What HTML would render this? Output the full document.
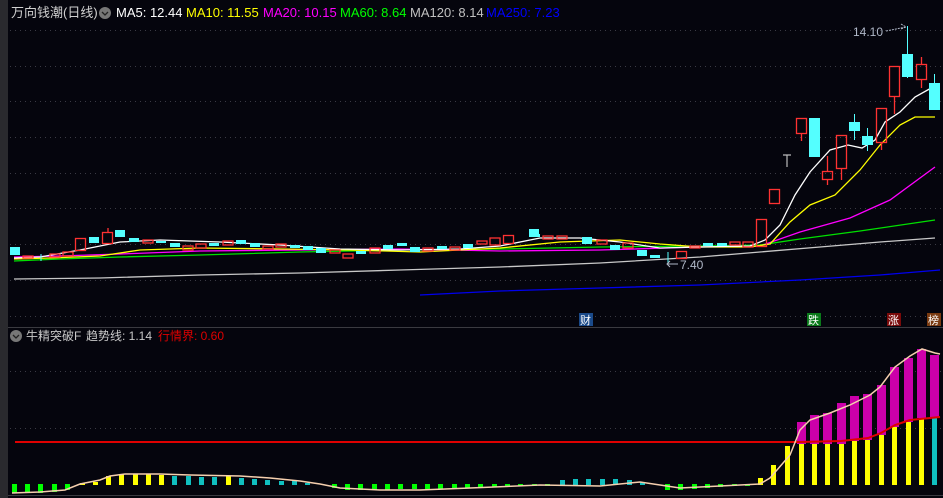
<!DOCTYPE html>
<html><head><meta charset="utf-8"><style>
html,body{margin:0;padding:0;background:#05050d;width:943px;height:498px;overflow:hidden}
svg{display:block}
text{font-family:"Liberation Sans","Noto Sans CJK SC",sans-serif}
</style></head><body>
<svg width="943" height="498" viewBox="0 0 943 498" xmlns="http://www.w3.org/2000/svg">
<rect x="0" y="0" width="943" height="498" fill="#05050d"/>
<rect x="0" y="0" width="8" height="498" fill="#2a2a2e"/>
<g stroke="#3a3a44" stroke-width="1" stroke-dasharray="1,4">
<line x1="10" y1="30.5" x2="943" y2="30.5"/><line x1="10" y1="66.5" x2="943" y2="66.5"/>
<line x1="10" y1="101.5" x2="943" y2="101.5"/><line x1="10" y1="137.5" x2="943" y2="137.5"/>
<line x1="10" y1="173.5" x2="943" y2="173.5"/><line x1="10" y1="208.5" x2="943" y2="208.5"/>
<line x1="10" y1="244.5" x2="943" y2="244.5"/><line x1="10" y1="280.5" x2="943" y2="280.5"/>
<line x1="10" y1="316.5" x2="943" y2="316.5"/>
<line x1="10" y1="371.5" x2="943" y2="371.5"/><line x1="10" y1="428.5" x2="943" y2="428.5"/>
</g>
<line x1="8" y1="327.5" x2="943" y2="327.5" stroke="#3a3a40"/>
<line x1="8" y1="495.5" x2="943" y2="495.5" stroke="#3a3a40"/>
<!-- header -->
<text x="11" y="17" font-size="13" fill="#d0d0d0">万向钱潮(日线)</text>
<circle cx="105" cy="13" r="6" fill="#777"/><path d="M102 12l3 3 3-3" stroke="#222" stroke-width="1.3" fill="none"/>
<text x="116" y="17" font-size="13" fill="#ffffff">MA5: 12.44</text>
<text x="186" y="17" font-size="13" fill="#ffff00">MA10: 11.55</text>
<text x="263" y="17" font-size="13" fill="#ff00ff">MA20: 10.15</text>
<text x="340" y="17" font-size="13" fill="#00ff00">MA60: 8.64</text>
<text x="410" y="17" font-size="13" fill="#c0c0c0">MA120: 8.14</text>
<text x="486" y="17" font-size="13" fill="#0000ff">MA250: 7.23</text>
<!-- MAs -->
<g fill="none" stroke-width="1.3">
<polyline stroke="#0000ee" points="420,295 500,291 600,288 700,285 800,280 880,275 940,270"/>
<polyline stroke="#c8c8c8" points="14,279 100,278 200,275 300,273 400,270 500,267 600,263 700,257 760,252 820,247 880,242 935,238"/>
<polyline stroke="#00e000" points="14,261 60,259 120,257 200,255 300,252 400,250 500,249 600,247 700,246 760,245 800,239 860,231 935,220"/>
<polyline stroke="#ff00ff" points="14,257 60,256 120,254 200,251 300,250 400,249 500,251 600,250 700,247 760,246 800,232 850,218 890,200 935,167"/>
<polyline stroke="#ffff00" points="14,259 50,258 100,256 140,250 200,248 280,249 350,250 420,252 500,248 560,242 620,240 660,244 700,247 750,247 770,244 790,222 810,205 835,195 860,170 880,145 900,125 915,117 935,117"/>
<polyline stroke="#ffffff" points="14,258 40,257 80,250 120,242 160,240 220,242 280,245 340,249 400,250 460,249 500,246 540,238 580,238 620,242 660,248 700,247 750,246 765,240 780,225 795,195 810,172 830,150 848,145 862,148 875,140 885,122 900,112 915,97 933,87"/>
</g>
<!-- candles -->
<g fill="#54ffff">
<rect x="10" y="247" width="10" height="8"/><rect x="89" y="237" width="10" height="6"/><rect x="115" y="230" width="10" height="7"/>
<rect x="129" y="238" width="10" height="4"/><rect x="156" y="241" width="10" height="2"/><rect x="170" y="243" width="10" height="4"/>
<rect x="209" y="243" width="10" height="3"/><rect x="236" y="240" width="10" height="4"/><rect x="250" y="243" width="10" height="4"/>
<rect x="290" y="245" width="10" height="3"/><rect x="303" y="246" width="10" height="4"/><rect x="316" y="248" width="10" height="5"/>
<rect x="356" y="251" width="10" height="3"/><rect x="383" y="245" width="10" height="4"/><rect x="397" y="243" width="10" height="3"/>
<rect x="410" y="247" width="10" height="5"/><rect x="437" y="246" width="10" height="3"/><rect x="463" y="244" width="10" height="4"/>
<rect x="529" y="229" width="10" height="8"/><rect x="530" y="234" width="10" height="3"/><rect x="582" y="237" width="10" height="7"/>
<rect x="610" y="245" width="10" height="5"/><rect x="637" y="250" width="10" height="6"/><rect x="650" y="255" width="10" height="3"/>
<rect x="703" y="243" width="10" height="3"/><rect x="717" y="243" width="10" height="3"/>
<rect x="809" y="118" width="11" height="39"/><rect x="849" y="122" width="11" height="9"/><rect x="862" y="136" width="11" height="9"/>
<rect x="902" y="54" width="11" height="23"/><rect x="929" y="83" width="11" height="27"/>
</g>
<g stroke="#54ffff" stroke-width="1">
<line x1="854.5" y1="114" x2="854.5" y2="140"/><line x1="867.5" y1="128" x2="867.5" y2="151"/>
<line x1="907.5" y1="26" x2="907.5" y2="78"/><line x1="934.5" y1="74" x2="934.5" y2="83"/>
<line x1="41" y1="254" x2="41" y2="261"/><line x1="668" y1="252" x2="668" y2="264"/>
</g>
<g fill="none" stroke="#ff3232" stroke-width="1.3">
<rect x="23" y="256" width="10" height="2"/><rect x="50" y="254" width="10" height="3"/><rect x="63" y="252" width="10" height="4"/>
<rect x="75.5" y="238.5" width="10" height="12"/><rect x="102.5" y="232.5" width="10" height="11"/><rect x="143" y="240" width="10" height="3"/>
<rect x="183" y="246" width="10" height="4"/><rect x="196" y="244" width="10" height="4"/><rect x="223" y="241" width="10" height="4"/>
<rect x="263" y="246" width="10" height="3"/><rect x="276" y="244" width="10" height="3"/><rect x="330" y="250" width="10" height="3"/>
<rect x="343" y="254" width="10" height="4"/><rect x="370" y="248" width="10" height="5"/><rect x="423" y="248" width="10" height="3"/>
<rect x="450" y="247" width="10" height="3"/><rect x="477" y="241" width="10" height="3"/><rect x="490" y="238" width="10" height="7"/>
<rect x="503.5" y="235.5" width="10" height="8"/><rect x="543" y="236" width="10" height="3"/><rect x="557" y="236" width="10" height="3"/>
<rect x="597" y="240" width="10" height="4"/><rect x="623" y="243" width="10" height="5"/><rect x="676.5" y="251.5" width="10" height="7"/>
<rect x="690" y="246" width="10" height="2"/><rect x="730" y="242" width="10" height="3"/><rect x="743" y="242" width="10" height="5"/>
<rect x="756.5" y="219.5" width="10" height="27"/><rect x="769.5" y="189.5" width="10" height="14"/><rect x="796.5" y="118.5" width="10" height="15"/>
<rect x="822.5" y="171.5" width="10" height="8"/><rect x="836.5" y="135.5" width="10" height="33"/><rect x="876.5" y="108.5" width="10" height="34"/>
<rect x="889.5" y="66.5" width="10" height="30"/><rect x="916.5" y="64.5" width="10" height="15"/>
<line x1="108" y1="228" x2="108" y2="232"/><line x1="801.5" y1="133" x2="801.5" y2="141"/><line x1="827.5" y1="156" x2="827.5" y2="171"/>
<line x1="827.5" y1="180" x2="827.5" y2="185"/><line x1="841.5" y1="168" x2="841.5" y2="180"/><line x1="894.5" y1="96" x2="894.5" y2="114"/>
<line x1="921.5" y1="57" x2="921.5" y2="64"/><line x1="921.5" y1="79" x2="921.5" y2="88"/><line x1="881.5" y1="142" x2="881.5" y2="150"/>
</g>
<path d="M783 155h8M787 155v12" stroke="#bbb" stroke-width="1.2"/>
<text x="853" y="36" font-size="12" fill="#b0b8c8">14.10</text>
<path d="M886 31l20-4M901 24l5 3-5 2" stroke="#b0b8c8" fill="none" stroke-dasharray="2,1"/>
<text x="680" y="269" font-size="12" fill="#b0b8c8">7.40</text>
<path d="M678 264h-11M670 261l-3 3 3 3" stroke="#b0b8c8" fill="none"/>
<!-- markers -->
<rect x="579" y="313" width="14" height="13" fill="#1a4a8a"/><text x="580" y="324" font-size="11" fill="#fff">财</text>
<rect x="807" y="313" width="14" height="13" fill="#0a7a1a"/><text x="808" y="324" font-size="11" fill="#fff">跌</text>
<rect x="887" y="313" width="14" height="13" fill="#7a0a0a"/><text x="888" y="324" font-size="11" fill="#fff">涨</text>
<rect x="927" y="313" width="14" height="13" fill="#7a3a10"/><text x="928" y="324" font-size="11" fill="#fff">榜</text>
<!-- lower panel header -->
<circle cx="16" cy="336" r="6" fill="#777"/><path d="M13 335l3 3 3-3" stroke="#222" stroke-width="1.3" fill="none"/>
<text x="26" y="340" font-size="12" fill="#c8c8c8">牛精突破F</text>
<text x="86" y="340" font-size="12" fill="#c8c8c8">趋势线: 1.14</text>
<text x="158" y="340" font-size="12" fill="#e00000">行情界: 0.60</text>
<!-- histogram -->
<g fill="#00ff00">
<rect x="12" y="484" width="5" height="9"/><rect x="25" y="484" width="5" height="9"/><rect x="38" y="484" width="5" height="9"/>
<rect x="52" y="484" width="5" height="8"/><rect x="65" y="484" width="5" height="6"/>
<rect x="332" y="484" width="5" height="4"/><rect x="345" y="484" width="5" height="6"/><rect x="358" y="484" width="5" height="6"/>
<rect x="372" y="484" width="5" height="6"/><rect x="385" y="484" width="5" height="6"/><rect x="398" y="484" width="5" height="5"/>
<rect x="412" y="484" width="5" height="5"/><rect x="425" y="484" width="5" height="5"/><rect x="438" y="484" width="5" height="5"/>
<rect x="452" y="484" width="5" height="4"/><rect x="465" y="484" width="5" height="4"/><rect x="478" y="484" width="5" height="4"/>
<rect x="492" y="484" width="5" height="3"/><rect x="505" y="484" width="5" height="3"/><rect x="518" y="484" width="5" height="2"/>
<rect x="532" y="484" width="5" height="2"/><rect x="545" y="484" width="5" height="2"/><rect x="665" y="484" width="5" height="6"/>
<rect x="678" y="484" width="5" height="6"/><rect x="692" y="484" width="5" height="5"/><rect x="705" y="484" width="5" height="4"/>
<rect x="718" y="484" width="5" height="3"/><rect x="732" y="484" width="5" height="2"/><rect x="745" y="484" width="5" height="2"/>
</g>
<g fill="#ffff00">
<rect x="80" y="483" width="5" height="2"/><rect x="93" y="482" width="5" height="3"/><rect x="106" y="476" width="5" height="9"/>
<rect x="119" y="474" width="5" height="11"/><rect x="133" y="474" width="5" height="11"/><rect x="146" y="474" width="5" height="11"/>
<rect x="159" y="475" width="5" height="10"/><rect x="226" y="476" width="5" height="9"/>
<rect x="758" y="478" width="5" height="7"/><rect x="771" y="465" width="5" height="20"/><rect x="785" y="446" width="5" height="39"/>
<rect x="799" y="444" width="5" height="41"/><rect x="812" y="444" width="5" height="41"/><rect x="825" y="444" width="5" height="41"/>
<rect x="839" y="444" width="5" height="41"/><rect x="852" y="441" width="5" height="44"/><rect x="865" y="440" width="5" height="45"/>
<rect x="879" y="435" width="5" height="50"/><rect x="892" y="427" width="5" height="58"/><rect x="906" y="422" width="5" height="63"/>
<rect x="919" y="418" width="5" height="67"/>
</g>
<g fill="#10c0c0">
<rect x="172" y="476" width="5" height="9"/><rect x="186" y="476" width="5" height="9"/><rect x="199" y="477" width="5" height="8"/>
<rect x="212" y="477" width="5" height="8"/><rect x="239" y="478" width="5" height="7"/><rect x="252" y="479" width="5" height="6"/>
<rect x="265" y="480" width="5" height="5"/><rect x="279" y="481" width="5" height="4"/><rect x="292" y="481" width="5" height="4"/>
<rect x="305" y="483" width="5" height="2"/><rect x="560" y="480" width="5" height="5"/><rect x="573" y="479" width="5" height="6"/>
<rect x="586" y="479" width="5" height="6"/><rect x="600" y="479" width="5" height="6"/><rect x="613" y="479" width="5" height="6"/>
<rect x="627" y="480" width="5" height="5"/><rect x="640" y="482" width="5" height="3"/>
<rect x="932" y="418" width="5" height="67"/>
</g>
<g fill="#cc00aa">
<rect x="797" y="422" width="9" height="22"/><rect x="810" y="415" width="9" height="29"/><rect x="823" y="413" width="9" height="31"/>
<rect x="837" y="403" width="9" height="41"/><rect x="850" y="396" width="9" height="45"/><rect x="863" y="394" width="9" height="46"/>
<rect x="877" y="385" width="9" height="50"/><rect x="890" y="367" width="9" height="60"/><rect x="904" y="358" width="9" height="64"/>
<rect x="917" y="349" width="9" height="69"/><rect x="930" y="355" width="9" height="63"/>
</g>
<polyline fill="none" stroke="#e00000" stroke-width="2" points="15,442 800,442 841,441 868,438 881,433 895,425 910,420 940,417"/>
<polyline fill="none" stroke="#f5cfae" stroke-width="1.5" points="12,493 40,492 65,490 80,484 100,480 110,476 125,474 160,474 190,475 240,476 270,478 300,481 320,484 340,488 380,490 420,490 470,488 540,485 600,486 640,482 660,485 680,488 760,484 770,478 790,455 800,430 810,420 830,413 850,405 870,395 880,387 895,367 910,356 922,349 935,353 940,354"/>
</svg>
</body></html>
